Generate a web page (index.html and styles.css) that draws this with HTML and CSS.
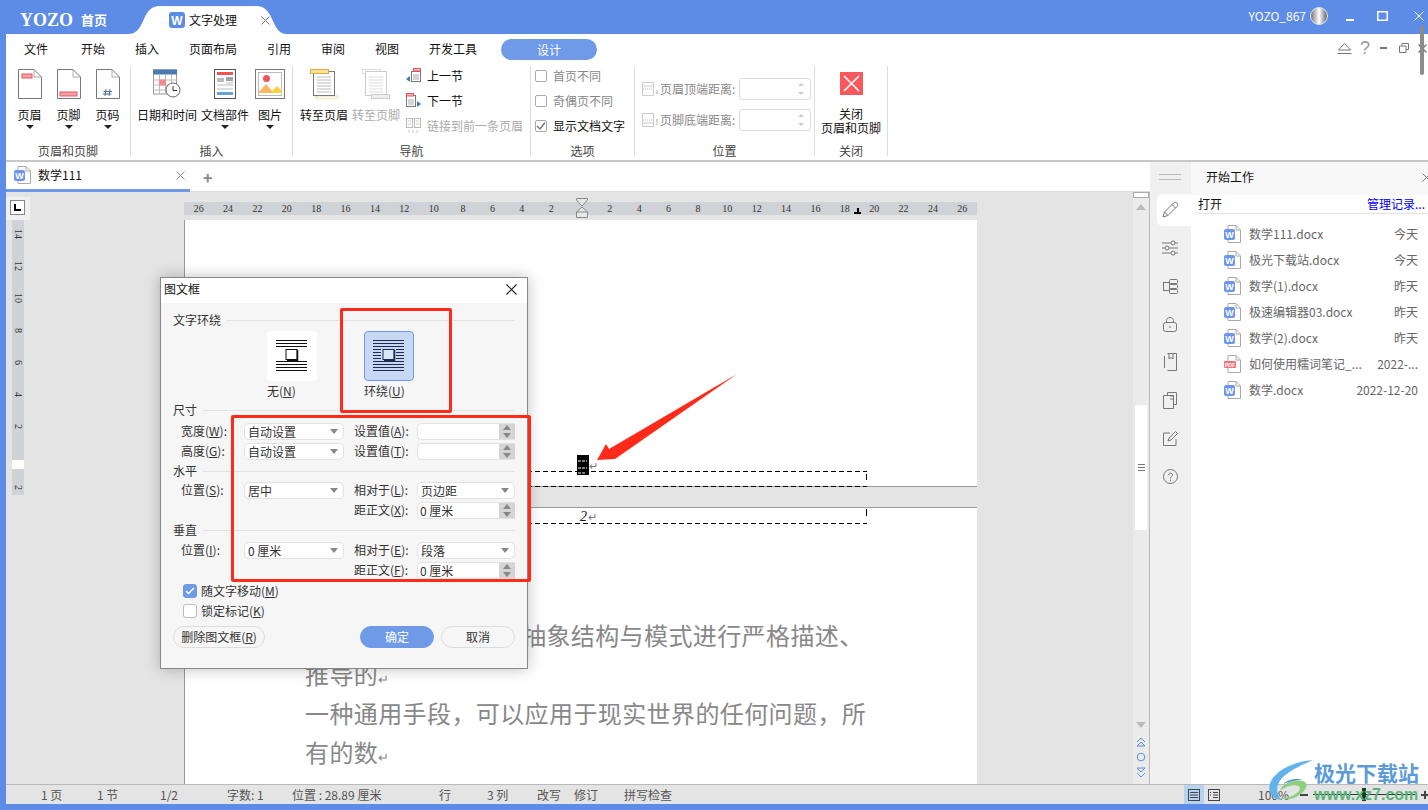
FILE: index.html
```html
<!DOCTYPE html>
<html lang="zh-CN">
<head>
    <meta charset="UTF-8">
    <title>文字处理 - YOZO</title>
    <link rel="stylesheet" href="styles.css">
</head>
<body>
<svg class="defs" width="0" height="0">
    <symbol id="doc-w" viewBox="0 0 17 18">
        <path d="M4 .5H12L16.5 5V17.5H4Z" fill="#fff" stroke="#aaa"/>
        <path d="M12 .5V5H16.5" fill="none" stroke="#aaa"/>
        <rect x="0" y="4" width="11" height="11" rx="2" fill="#6d95ea"/>
    </symbol>
    <symbol id="doc-pdf" viewBox="0 0 17 18">
        <path d="M4 .5H12L16.5 5V17.5H4Z" fill="#fff" stroke="#aaa"/>
        <path d="M12 .5V5H16.5" fill="none" stroke="#aaa"/>
        <rect x="0" y="6" width="12" height="7" rx="1" fill="#f4727c"/>
    </symbol>
    <symbol id="page" viewBox="0 0 24 30">
        <path d="M.5.5H16L23.5 8V29.5H.5Z" fill="#fff" stroke="#777"/>
        <path d="M16 .5V8H23.5" fill="none" stroke="#aaa"/>
    </symbol>
</svg>

<header class="titlebar">
    <div class="logo"><span class="logo-mark">YOZO</span><span class="logo-home">首页</span></div>
    <div class="app-tab">
        <svg class="app-tab-shape" width="159" height="28" viewBox="0 0 159 28"><path d="M0 28C10 28 12 21 16 13C20 4 24 0 32 0H128C136 0 140 4 144 13C148 21 150 28 159 28Z" fill="#fff"/></svg>
        <svg class="app-tab-icon" width="16" height="16" viewBox="0 0 16 16"><rect width="16" height="16" rx="3" fill="#5b8ce6"/><text x="8" y="12.5" font-size="12" font-weight="700" text-anchor="middle" fill="#fff" font-family="Liberation Sans, sans-serif">W</text></svg>
        <span class="app-tab-name">文字处理</span>
        <svg class="app-tab-close" width="9" height="9" viewBox="0 0 9 9"><path d="M.5.5L8.5 8.5M8.5.5L.5 8.5" stroke="#777"/></svg>
    </div>
    <div class="user">
        <span>YOZO_867</span>
        <span class="avatar"></span>
        <svg class="win-btn" width="8" height="3" viewBox="0 0 8 3"><rect width="8" height="2" y="1" fill="#fff"/></svg>
        <svg class="win-btn win-max" width="11" height="10" viewBox="0 0 11 10"><rect x=".75" y=".75" width="9.5" height="8.5" fill="none" stroke="#fff" stroke-width="1.5"/></svg>
        <svg class="win-btn win-close" width="10" height="10" viewBox="0 0 10 10"><path d="M.5.5L9.5 9.5M9.5.5L.5 9.5" stroke="#fff"/></svg>
    </div>
</header>

<div class="app">
    <section class="ribbon">
        <nav class="ribbon-tabs">
            <span>文件</span><span>开始</span><span>插入</span><span>页面布局</span><span>引用</span><span>审阅</span><span>视图</span><span>开发工具</span>
            <span class="tab-pill">设计</span>
        </nav>
        <div class="ribbon-help">
            <svg width="15" height="13" viewBox="0 0 15 13"><path d="M1.5 8L7.5 1.5L13.5 8ZM.5 11.5H14.5" fill="none" stroke="#777"/></svg>
            <span class="help-q">?</span>
            <svg class="help-min" width="7" height="2" viewBox="0 0 7 2"><rect width="7" height="2" fill="#777"/></svg>
            <svg class="help-restore" width="10" height="10" viewBox="0 0 10 10"><path d="M3 2.5V.5H9.5V6.5H7M.5 3H7V9.5H.5Z" fill="none" stroke="#777"/></svg>
            <svg class="help-close" width="9" height="9" viewBox="0 0 9 9"><path d="M.5.5L8.5 8.5M8.5.5L.5 8.5" stroke="#777" stroke-width="1.4"/></svg>
        </div>
        <div class="ribbon-groups">
            <div class="group group-header">
                <div class="group-body">
                    <button class="big-btn w39">
                        <svg class="big-icon" width="24" height="30"><use href="#page"/><rect x="4" y="5" width="10" height="4" fill="#f5a3a8" stroke="#e8555c"/></svg>
                        <span>页眉</span><i class="caret"></i>
                    </button>
                    <button class="big-btn w39">
                        <svg class="big-icon" width="24" height="30"><use href="#page"/><rect x="3" y="23" width="17" height="4" fill="#f5a3a8" stroke="#e8555c"/></svg>
                        <span>页脚</span><i class="caret"></i>
                    </button>
                    <button class="big-btn w39">
                        <svg class="big-icon" width="24" height="30"><use href="#page"/><path d="M10 20L9 27M14 20L13 27M7.5 22.5H16M7 25H15.5" stroke="#4a6f9c" fill="none"/></svg>
                        <span>页码</span><i class="caret"></i>
                    </button>
                </div>
                <div class="group-label">页眉和页脚</div>
            </div>
            <div class="group group-insert">
                <div class="group-body">
                    <button class="big-btn w60">
                        <svg class="big-icon" width="28" height="29" viewBox="0 0 28 29"><rect x=".5" y=".5" width="23" height="24" fill="#fff" stroke="#999"/><rect x="0" y="0" width="24" height="5" fill="#4a7ab0"/><path d="M6.5 5V25M12.5 5V25M18.500 5V25M0 10.5H24M0 15.5H24M0 20.5H24" stroke="#bbb"/><rect x="6" y="10" width="7" height="6" fill="#f78a8f"/><circle cx="20" cy="20.5" r="7" fill="#fff" stroke="#666"/><path d="M20 16.5V21H24" fill="none" stroke="#333"/></svg>
                        <span>日期和时间</span>
                    </button>
                    <button class="big-btn w56">
                        <svg class="big-icon" width="22" height="30" viewBox="0 0 22 30"><rect x=".5" y=".5" width="21" height="29" fill="#fff" stroke="#555"/><rect x="3" y="3" width="16" height="3" fill="#ef5358"/><rect x="3" y="9" width="7" height="4" fill="#bbb"/><rect x="12" y="8" width="7" height="4" fill="#9aa6b0"/><path d="M12 14H19M3 16H19M3 20H19" stroke="#bbb"/><rect x="3" y="23" width="16" height="3" fill="#6a9fd4"/></svg>
                        <span>文档部件</span><i class="caret"></i>
                    </button>
                    <button class="big-btn w34">
                        <svg class="big-icon" width="30" height="30" viewBox="0 0 30 30"><rect x=".5" y=".5" width="29" height="29" fill="#fff" stroke="#777"/><rect x="3.5" y="3.5" width="23" height="23" fill="#fff" stroke="#bbb"/><circle cx="11.5" cy="9.5" r="3.5" fill="#f0555a"/><path d="M3 24L11 15L19 24Z" fill="#fbb85f"/><path d="M15 24L22 17L27 22V24Z" fill="#f9d448"/></svg>
                        <span>图片</span><i class="caret"></i>
                    </button>
                </div>
                <div class="group-label">插入</div>
            </div>
            <div class="group group-nav">
                <div class="group-body">
                    <button class="big-btn w52">
                        <svg class="big-icon" width="28" height="30" viewBox="0 0 28 30"><rect x="6" y="27" width="22" height="3" fill="#fff" stroke="#f5cf87"/><rect x="3.5" y="2.5" width="21" height="24" fill="#fff" stroke="#777"/><path d="M7 8H21M7 11H21M7 14H21M7 17H21M7 20H21M7 23H21" stroke="#bbb"/><rect x=".5" y=".5" width="18" height="4" fill="#fde39c" stroke="#e6a83a"/></svg>
                        <span>转至页眉</span>
                    </button>
                    <button class="big-btn w52 is-off">
                        <svg class="big-icon" width="28" height="30" viewBox="0 0 28 30"><rect x="0.5" y=".5" width="18" height="4" fill="#fff" stroke="#ddd"/><rect x="3.5" y="2.5" width="21" height="24" fill="#fff" stroke="#ccc"/><path d="M7 8H21M7 11H21M7 14H21M7 17H21M7 20H21M7 23H21" stroke="#ddd"/><rect x="9.5" y="25.5" width="18" height="4" fill="#eee" stroke="#ccc"/></svg>
                        <span>转至页脚</span>
                    </button>
                    <div class="stack">
                        <div class="stack-row">
                            <svg width="15" height="16" viewBox="0 0 15 16"><path d="M0 11L4 8V14Z" fill="#4a7ab0"/><rect x="5.5" y="3.5" width="9" height="10" fill="#fff" stroke="#777"/><path d="M7 7H13M7 9H13M7 11H13" stroke="#aaa"/><rect x="7.5" y=".5" width="7" height="2.5" fill="#fbb" stroke="#e8555c"/></svg>
                            <span>上一节</span>
                        </div>
                        <div class="stack-row">
                            <svg width="15" height="16" viewBox="0 0 15 16"><path d="M15 11L11 8V14Z" fill="#4a7ab0"/><rect x=".5" y="2.5" width="9" height="11" fill="#fff" stroke="#777"/><path d="M2 7H8M2 9H8M2 11H8" stroke="#aaa"/><rect x=".5" y=".5" width="7" height="2.5" fill="#fbb" stroke="#e8555c"/></svg>
                            <span>下一节</span>
                        </div>
                        <div class="stack-row is-off">
                            <svg width="15" height="16" viewBox="0 0 15 16"><rect x=".5" y=".5" width="6" height="9" fill="none" stroke="#bbb"/><rect x="8.5" y=".5" width="6" height="9" fill="none" stroke="#bbb"/><path d="M2 3H5M2 6H5M10 3H13M10 6H13M3 12V15M7 12V15M11 12V15" stroke="#ccc"/></svg>
                            <span>链接到前一条页眉</span>
                        </div>
                    </div>
                </div>
                <div class="group-label">导航</div>
            </div>
            <div class="group group-opts">
                <div class="group-body">
                    <div class="stack">
                        <label class="stack-row is-muted"><i class="ribbon-check"></i><span>首页不同</span></label>
                        <label class="stack-row is-muted"><i class="ribbon-check"></i><span>奇偶页不同</span></label>
                        <label class="stack-row"><i class="ribbon-check"><svg width="10" height="10" viewBox="0 0 10 10"><path d="M1 5L4 8L9 1.5" fill="none" stroke="#777" stroke-width="1.4"/></svg></i><span>显示文档文字</span></label>
                    </div>
                </div>
                <div class="group-label">选项</div>
            </div>
            <div class="group group-pos">
                <div class="group-body">
                    <div class="pos-rows">
                        <div class="pos-row">
                            <svg width="17" height="14" viewBox="0 0 17 14"><rect x=".5" y=".5" width="11" height="13" fill="#fff" stroke="#ccc"/><path d="M1 4H11" stroke="#ccc"/><path d="M1 7H11" stroke="#bbb" stroke-dasharray="1 1"/><path d="M15 8V12M14 11H16" stroke="#bbb"/></svg>
                            <span>页眉顶端距离:</span>
                            <div class="pos-input"><i class="up"></i><i class="down"></i></div>
                        </div>
                        <div class="pos-row">
                            <svg width="17" height="14" viewBox="0 0 17 14"><rect x=".5" y=".5" width="11" height="13" fill="#fff" stroke="#ccc"/><path d="M1 10H11" stroke="#ccc"/><path d="M1 7H11" stroke="#bbb" stroke-dasharray="1 1"/><path d="M15 6V12M14 7H16" stroke="#bbb"/></svg>
                            <span>页脚底端距离:</span>
                            <div class="pos-input"><i class="up"></i><i class="down"></i></div>
                        </div>
                    </div>
                </div>
                <div class="group-label">位置</div>
            </div>
            <div class="group group-close">
                <div class="group-body">
                    <button class="big-btn close-btn">
                        <svg width="23" height="23" viewBox="0 0 23 23"><rect width="23" height="23" fill="#f9585c"/><path d="M4 4L19 19M19 4L4 19" stroke="#fff" stroke-width="1.6"/></svg>
                        <span>关闭<br>页眉和页脚</span>
                    </button>
                </div>
                <div class="group-label">关闭</div>
            </div>
        </div>
    </section>

    <div class="work">
        <main class="editor">
            <div class="doc-tabs">
                <div class="doc-tab">
                    <svg width="17" height="18" viewBox="0 0 17 18"><use href="#doc-w"/><text class="doc-letter" x="5.5" y="12.5">W</text></svg>
                    <span class="doc-tab-name">数学111</span>
                    <svg class="doc-tab-close" width="9" height="9" viewBox="0 0 9 9"><path d="M.5.5L8.5 8.5M8.5.5L.5 8.5" stroke="#888"/></svg>
                </div>
                <span class="doc-add">+</span>
            </div>
            <div class="doc-area">
                <div class="side-ruler">
                    <div class="tab-stop"><span class="tab-stop-box"><i></i></span></div>
                    <div class="vruler">
                        <span>14</span><span>12</span><span>10</span><span>8</span><span>6</span><span>4</span><span>2</span>
                        <b class="vruler-mark"></b>
                        <span class="vruler-last">2</span>
                    </div>
                </div>
                <div class="pages">
                    <div class="hruler">
                        <span>26</span><span>24</span><span>22</span><span>20</span><span>18</span><span>16</span><span>14</span><span>12</span><span>10</span><span>8</span><span>6</span><span>4</span><span>2</span>
                        <span class="hruler-mark"><svg width="12" height="20" viewBox="0 0 12 20"><path d="M.5.5H11.5V2L6 8L.5 2ZM6 9L11.5 14V19.5H.5V14Z" fill="#e8e8e8" stroke="#888"/><path d="M.5 14H11.5" stroke="#888"/></svg></span>
                        <span>2</span><span>4</span><span>6</span><span>8</span><span>10</span><span>12</span><span>14</span><span>16</span><span>18</span><span>20</span><span>22</span><span>24</span><span>26</span>
                        <i class="hruler-stop"></i>
                    </div>
                    <div class="page page-first">
                        <div class="frame-mark">
                            <svg width="12" height="20" viewBox="0 0 12 20"><rect width="12" height="20" fill="#000"/><path d="M1 6H10M1 13H10M1 18H8" stroke="#fff" stroke-dasharray="3 1"/></svg>
                            <span class="para-mark">↵</span>
                        </div>
                        <div class="footer-frame"></div>
                    </div>
                    <div class="page page-second">
                        <div class="header-frame"><em>2</em><span class="para-mark">↵</span></div>
                        <div class="body-text">
                            <p class="first-line">抽象结构与模式进行严格描述、</p>
                            <p>推导的<span class="para-small">↵</span></p>
                            <p>一种通用手段，可以应用于现实世界的任何问题，所</p>
                            <p>有的数<span class="para-small">↵</span></p>
                        </div>
                    </div>
                </div>
                <div class="vscroll">
                    <div class="splitter"></div>
                    <i class="arrow-up"></i>
                    <div class="thumb"><svg width="7" height="7" viewBox="0 0 7 7"><path d="M0 .5H7M0 3.5H7M0 6.5H7" stroke="#777"/></svg></div>
                    <i class="arrow-down"></i>
                    <svg class="scroll-nav" width="10" height="42" viewBox="0 0 10 42" fill="none" stroke="#5b8ce6"><path d="M1 5L5 1L9 5M1 9H9L5 5Z"/><circle cx="5" cy="20" r="3.8"/><path d="M1 31H9L5 35ZM1 36L5 40L9 36"/></svg>
                </div>
            </div>
        </main>
        <aside class="panel">
            <div class="rail">
                <div class="rail-grip"></div>
                <div class="rail-item is-active"><svg width="18" height="18" viewBox="0 0 18 18" fill="none" stroke="#777"><path d="M2 16L3.5 11L12.5 2C13.5 1 15 1 16 2C17 3 17 4.5 16 5.500L7 14.500ZM3.500 11L7 14.500M11 3.500L14.500 7"/></svg></div>
                <div class="rail-item"><svg width="16" height="16" viewBox="0 0 16 16" fill="none" stroke="#777"><path d="M0 3H9M13 3H16M0 8H3M7 8H16M0 13H9M13 13H16"/><circle cx="11" cy="3" r="2"/><circle cx="5" cy="8" r="2"/><circle cx="11" cy="13" r="2"/></svg></div>
                <div class="rail-item"><svg width="15" height="15" viewBox="0 0 15 15" fill="none" stroke="#777"><rect x=".5" y="3.500" width="6" height="8"/><rect x="6.500" y=".5" width="8" height="4" rx="1"/><rect x="6.500" y="5.500" width="8" height="4" rx="1"/><rect x="6.500" y="10.500" width="8" height="4" rx="1"/></svg></div>
                <div class="rail-item"><svg width="14" height="16" viewBox="0 0 14 16" fill="none" stroke="#777"><rect x=".5" y="6.500" width="13" height="9" rx="2"/><path d="M3.500 6.500V4.500C3.500 .5 10.500 .5 10.500 4.500V6.500M7 10V12"/></svg></div>
                <div class="rail-item"><svg width="13" height="18" viewBox="0 0 13 18" fill="none" stroke="#777"><path d="M3.500.5H12.500V17.500H3.500M.5 3V15M5 .5V6L7 4.500L9 6V.5"/></svg></div>
                <div class="rail-item"><svg width="14" height="17" viewBox="0 0 14 17" fill="none" stroke="#777"><path d="M4.500 3.500V.5H13.500V12.500H10.500M.5 3.500H10.500V16.500H.5ZM7 4V4M7 4H11M7 7H11"/></svg></div>
                <div class="rail-item"><svg width="15" height="15" viewBox="0 0 15 15" fill="none" stroke="#777"><path d="M13 8V14.500H.5V2H7M5 10L6 7L12.500 .5L14.500 2.500L8 9Z"/></svg></div>
                <div class="rail-item"><svg width="15" height="15" viewBox="0 0 15 15" fill="none" stroke="#777"><circle cx="7.500" cy="7.500" r="7"/><path d="M5.500 6C5.500 3.500 9.500 3.500 9.500 6C9.500 7.500 7.500 7.500 7.500 9.500M7.500 10.500V12"/></svg></div>
            </div>
            <div class="panel-main">
                <div class="panel-head">
                    <span>开始工作</span>
                    <svg width="9" height="9" viewBox="0 0 9 9"><path d="M.5.5L8.5 8.5M8.5.5L.5 8.5" stroke="#777"/></svg>
                </div>
                <div class="panel-open"><span>打开</span><a>管理记录...</a></div>
                <ul class="recent">
                    <li><svg width="17" height="18" viewBox="0 0 17 18"><use href="#doc-w"/><text class="doc-letter" x="5.5" y="12.5">W</text></svg><span class="recent-name">数学111.docx</span><span>今天</span></li>
                    <li><svg width="17" height="18" viewBox="0 0 17 18"><use href="#doc-w"/><text class="doc-letter" x="5.5" y="12.5">W</text></svg><span class="recent-name">极光下载站.docx</span><span>今天</span></li>
                    <li><svg width="17" height="18" viewBox="0 0 17 18"><use href="#doc-w"/><text class="doc-letter" x="5.5" y="12.5">W</text></svg><span class="recent-name">数学(1).docx</span><span>昨天</span></li>
                    <li><svg width="17" height="18" viewBox="0 0 17 18"><use href="#doc-w"/><text class="doc-letter" x="5.5" y="12.5">W</text></svg><span class="recent-name">极速编辑器03.docx</span><span>昨天</span></li>
                    <li><svg width="17" height="18" viewBox="0 0 17 18"><use href="#doc-w"/><text class="doc-letter" x="5.5" y="12.5">W</text></svg><span class="recent-name">数学(2).docx</span><span>昨天</span></li>
                    <li><svg width="17" height="18" viewBox="0 0 17 18"><use href="#doc-pdf"/><text class="doc-letter doc-letter-pdf" x="6" y="11.5">PDF</text></svg><span class="recent-name">如何使用糯词笔记_...</span><span>2022-...</span></li>
                    <li><svg width="17" height="18" viewBox="0 0 17 18"><use href="#doc-w"/><text class="doc-letter" x="5.5" y="12.5">W</text></svg><span class="recent-name">数学.docx</span><span>2022-12-20</span></li>
                </ul>
            </div>
        </aside>
    </div>

    <footer class="statusbar">
        <div class="status-cells">
            <span>1 页</span><span>1 节</span><span>1/2</span><span>字数: 1</span><span>位置 : 28.89 厘米</span><span>行</span><span>3 列</span><span>改写</span><span>修订</span><span>拼写检查</span>
        </div>
        <div class="status-right">
            <span class="view-btn is-active"><svg width="12" height="12" viewBox="0 0 12 12" fill="none" stroke="#444"><rect x=".5" y=".5" width="11" height="11"/><path d="M2 3.500H10M2 6H10M2 8.500H10"/></svg></span>
            <span class="view-btn view-outline"><svg width="12" height="12" viewBox="0 0 12 12" fill="none" stroke="#444"><rect x=".5" y=".5" width="11" height="11"/><path d="M2 3.500H3M5 3.500H10M5 6H10M5 8.500H10M2 6H3"/></svg></span>
            <span class="zoom-val">100%</span>
            <span class="zoom-minus"></span>
            <span class="zoom-track"><i></i></span>
            <span class="zoom-plus"></span>
        </div>
    </footer>
</div>

<!-- dialog floats over the document -->
<div class="dialog">
    <div class="dialog-head">
        <span>图文框</span>
        <svg width="11" height="11" viewBox="0 0 11 11"><path d="M.5.5L10.5 10.500M10.500.5L.5 10.500" stroke="#222" stroke-width="1.1"/></svg>
    </div>
    <div class="dialog-body">
        <div class="sec-title"><span>文字环绕</span></div>
        <div class="wrap-opts">
            <div class="wrap-opt">
                <div class="wrap-tile">
                    <svg width="32" height="32" viewBox="0 0 32 32" stroke="#111" fill="none"><path d="M0 .5H31M0 3.500H31M0 6.500H31M0 21.500H31M0 24.500H31M0 27.500H31M0 30.500H31"/><rect x="10" y="9.500" width="11" height="10" fill="#fff"/><path d="M21.500 10V20.500H11" stroke-width="1.500"/></svg>
                </div>
                <span>无(<u>N</u>)</span>
            </div>
            <div class="wrap-opt">
                <div class="wrap-tile is-active">
                    <svg width="32" height="32" viewBox="0 0 32 32" stroke="#1d2b4f" fill="none"><path d="M0 .5H31M0 3.500H31M0 6.500H31M0 9.500H8M23 9.500H31M0 12.500H8M23 12.500H31M0 15.500H8M23 15.500H31M0 18.500H8M23 18.500H31M0 21.500H31M0 24.500H31M0 27.500H31M0 30.500H31"/><rect x="10" y="9.500" width="11" height="10" fill="#dbe6f8"/><path d="M21.500 10V20.500H11" stroke-width="1.500"/></svg>
                </div>
                <span>环绕(<u>U</u>)</span>
            </div>
        </div>

        <div class="sec-title sec-size"><span>尺寸</span></div>
        <div class="form-grid form-size">
            <label>宽度(<u>W</u>):</label><div class="combo"><span>自动设置</span><i></i></div>
            <label class="col-r">设置值(<u>A</u>):</label><div class="spin"><span></span><b></b></div>
            <label>高度(<u>G</u>):</label><div class="combo"><span>自动设置</span><i></i></div>
            <label class="col-r">设置值(<u>T</u>):</label><div class="spin"><span></span><b></b></div>
        </div>

        <div class="sec-title"><span>水平</span></div>
        <div class="form-grid form-horiz">
            <label>位置(<u>S</u>):</label><div class="combo"><span>居中</span><i></i></div>
            <label class="col-r">相对于(<u>L</u>):</label><div class="combo col-v"><span>页边距</span><i></i></div>
            <label class="col-r">距正文(<u>X</u>):</label><div class="spin"><span>0 厘米</span><b></b></div>
        </div>

        <div class="sec-title"><span>垂直</span></div>
        <div class="form-grid form-vert">
            <label>位置(<u>I</u>):</label><div class="combo"><span>0 厘米</span><i></i></div>
            <label class="col-r">相对于(<u>E</u>):</label><div class="combo col-v"><span>段落</span><i></i></div>
            <label class="col-r">距正文(<u>F</u>):</label><div class="spin"><span>0 厘米</span><b></b></div>
        </div>

        <div class="checks">
            <label class="check-row"><i class="check is-on"><svg width="10" height="8" viewBox="0 0 10 8"><path d="M1 4L3.500 6.500L9 1" fill="none" stroke="#fff" stroke-width="1.500"/></svg></i><span>随文字移动(<u>M</u>)</span></label>
            <label class="check-row"><i class="check"></i><span>锁定标记(<u>K</u>)</span></label>
        </div>

        <div class="dialog-actions">
            <button class="btn btn-del">删除图文框(<u>R</u>)</button>
            <button class="btn btn-ok">确定</button>
            <button class="btn btn-cancel">取消</button>
        </div>
    </div>
</div>

<!-- red marks drawn on top of the screenshot -->
<div class="mark mark-wrap"></div>
<div class="mark mark-form"></div>
<svg class="mark-arrow" width="150" height="95" viewBox="0 0 150 95"><path d="M7 90L16 74L19 79L147 4L25 89Z" fill="#ff2a1a"/></svg>
<div class="corner-scroll"></div>

<div class="watermark">
    <svg width="46" height="42" viewBox="0 0 46 42" fill="none"><path d="M45 0C30 1 10 8 3 21C-2 32 5 40 14 40C8 35 7 26 14 18C22 10 34 5 45 0Z" fill="#62b3ec"/><path d="M12 31C14 23 26 19 35 21C42 23 38 32 28 37C22 40 17 40 14 38C22 38 32 33 32 28C32 24 20 24 12 31Z" fill="#8ccf7e"/><path d="M15 24C20 19 30 18 34 20C27 20 20 22 15 24Z" fill="#4f8fd0"/></svg>
    <div class="wm-text">
        <span class="wm-name">极光下载站</span>
        <span class="wm-url">www.xz7.com</span>
    </div>
</div>
</body>
</html>
```

FILE: styles.css
```css
:root {
    --blue: #5c8ce6;
    --grey-bg: #e4e4e4;
    --ruler: #cfd2d6;
    --red: #ff2a1a;
}
* {
    box-sizing: border-box;
}
html, body {
    height: 810px;
    overflow: hidden;
}
body {
    margin: 0;
    position: relative;
    background: var(--blue);
    font-family: "Noto Sans CJK SC", "Liberation Sans", sans-serif;
    font-size: 12px;
    color: #111;
    line-height: 16px;
}
button {
    font: inherit;
    color: inherit;
    background: none;
    border: none;
    padding: 0;
}
svg {
    display: block;
    flex: none;
}
.defs {
    position: absolute;
}
.doc-letter {
    font-family: "Liberation Sans", sans-serif;
    font-size: 9px;
    font-weight: 700;
    text-anchor: middle;
    fill: #fff;
}
.doc-letter-pdf {
    font-size: 5px;
}

/* title bar */
.titlebar {
    height: 34px;
    display: flex;
    align-items: flex-end;
    color: #fff;
}
.logo {
    width: 128px;
    height: 34px;
    padding: 6px 0 0 20px;
    display: flex;
    align-items: center;
    gap: 9px;
}
.logo-mark {
    font-family: "Liberation Serif", serif;
    font-weight: 700;
    font-size: 18px;
    width: 52px;
}
.logo-home {
    font-weight: 700;
    font-size: 13px;
}
.app-tab {
    position: relative;
    width: 159px;
    height: 28px;
    display: flex;
    align-items: center;
    color: #111;
    padding-left: 41px;
}
.app-tab-shape {
    position: absolute;
    left: 0;
    top: 0;
}
.app-tab-icon, .app-tab-name, .app-tab-close {
    position: relative;
}
.app-tab-name {
    margin-left: 4px;
}
.app-tab-close {
    margin-left: 24px;
}
.user {
    margin-left: auto;
    height: 34px;
    padding-right: 4px;
    display: flex;
    align-items: center;
    font-size: 12px;
    padding-bottom: 2px;
}
.avatar {
    width: 18px;
    height: 18px;
    margin-left: 4px;
    border-radius: 50%;
    border: 1px solid #dfe6f3;
    background: linear-gradient(90deg, #777, #fff 50%, #666);
}
.win-btn {
    margin-left: 18px;
    margin-top: 6px;
}
.win-max {
    margin-left: 23px;
    margin-top: 0;
}
.win-close {
    margin-left: 26px;
    margin-top: 0;
}

/* main frame */
.app {
    margin-left: 6px;
    height: 770px;
    background: #fff;
    display: flex;
    flex-direction: column;
}

/* ribbon */
.ribbon {
    position: relative;
    height: 128px;
    border-bottom: 2px solid #c8c8c8;
}
.ribbon-tabs {
    height: 30px;
    padding: 0 0 0 18px;
    display: grid;
    grid-template-columns: 57px 54px 54px 78px 54px 54px 54px 72px 96px;
    align-items: center;
    justify-content: start;
}
.tab-pill {
    height: 21px;
    margin-top: 1px;
    border-radius: 11px;
    background: #6f9ae8;
    color: #fff;
    text-align: center;
    line-height: 21px;
}
.ribbon-help {
    position: absolute;
    right: 1px;
    top: 6px;
    height: 16px;
    display: flex;
    align-items: center;
}
.help-q {
    width: 9px;
    margin-left: 8px;
    font-family: "Liberation Sans", sans-serif;
    font-size: 18px;
    color: #999;
}
.help-min { margin-left: 11px; }
.help-restore { margin-left: 12px; }
.help-close { margin-left: 9px; }
.corner-scroll {
    position: absolute;
    left: 1420px;
    top: 25px;
    width: 4px;
    height: 50px;
    border-radius: 2px;
    background: #8c8c8c;
}
.ribbon-groups {
    height: 90px;
    margin-top: 2px;
    display: flex;
}
.group {
    display: flex;
    flex-direction: column;
    border-right: 1px solid #ddd;
}
.group-body {
    height: 77px;
    display: flex;
}
.group-label {
    height: 16px;
    margin-bottom: -3px;
    text-align: center;
    color: #444;
}
.group-header { width: 125px; }
.group-insert { width: 162px; }
.group-nav { width: 238px; }
.group-opts { width: 104px; }
.group-pos { width: 180px; }
.group-close { width: 73px; }
.group-header .group-body { padding-left: 4px; }
.group-insert .group-body { padding-left: 6px; }
.group-nav .group-body { padding-left: 5px; }
.group-opts .group-body { padding-left: 4px; }

.big-btn {
    display: flex;
    flex-direction: column;
    align-items: center;
    padding-top: 3px;
    white-space: nowrap;
}
.big-btn > span {
    line-height: 16px;
}
.big-icon {
    margin-bottom: 8px;
    height: 30px;
}
.w34 { width: 34px; }
.w39 { width: 39px; }
.w52 { width: 52px; }
.w56 { width: 56px; }
.w60 { width: 60px; }
.caret {
    margin-top: 2px;
    border: 4px solid transparent;
    border-top-color: #222;
    border-bottom: none;
}
.is-off {
    color: #aaa;
}
.is-muted {
    color: #888;
}
.stack {
    display: flex;
    flex-direction: column;
    gap: 5px;
    margin-left: 4px;
}
.stack-row {
    height: 20px;
    display: flex;
    align-items: center;
    gap: 6px;
    white-space: nowrap;
}
.ribbon-check {
    width: 12px;
    height: 12px;
    border: 1px solid #aaa;
    border-radius: 2px;
    display: flex;
    align-items: center;
    justify-content: center;
}
.group-opts .stack {
    margin-left: 0;
}
.pos-rows {
    padding: 12px 0 0 7px;
    display: flex;
    flex-direction: column;
    gap: 9px;
    color: #888;
}
.pos-row {
    height: 22px;
    display: flex;
    align-items: center;
}
.pos-row > span {
    width: 79px;
    margin-left: 1px;
    white-space: nowrap;
}
.pos-input {
    position: relative;
    width: 72px;
    height: 22px;
    border: 1px solid #ddd;
    border-radius: 3px;
    background: #fff;
}
.pos-input .up, .pos-input .down {
    position: absolute;
    right: 6px;
    border: 3px solid transparent;
}
.pos-input .up {
    top: 1px;
    border-bottom-color: #ccc;
}
.pos-input .down {
    bottom: 1px;
    border-top-color: #ccc;
}
.close-btn {
    width: 72px;
    padding-top: 6px;
}
.close-btn svg {
    margin-bottom: 12px;
}
.close-btn > span {
    line-height: 14px;
    text-align: center;
}

/* work area */
.work {
    flex: 1;
    min-height: 0;
    display: flex;
}
.editor {
    width: 1144px;
    display: flex;
    flex-direction: column;
}
.doc-tabs {
    height: 30px;
    flex: none;
    display: flex;
    align-items: center;
    border-bottom: 1px solid #ddd;
}
.doc-tab {
    width: 184px;
    height: 30px;
    flex: none;
    padding: 0 0 0 8px;
    display: flex;
    align-items: center;
    border-bottom: 3px solid #6f9ae8;
}
.doc-tab-name {
    width: 138px;
    margin-left: 7px;
    white-space: nowrap;
}
.doc-add {
    margin-left: 13px;
    font-size: 16px;
    font-weight: 700;
    color: #888;
}
.doc-area {
    flex: 1;
    min-height: 0;
    display: flex;
    background: var(--grey-bg);
}
.side-ruler {
    width: 178px;
    padding-top: 5px;
}
.tab-stop {
    width: 24px;
    height: 23px;
    padding: 3px 4px;
    background: #f0f0f0;
}
.tab-stop-box {
    display: block;
    width: 15px;
    height: 15px;
    border: 1px solid #888;
    background: #fff;
    padding: 3px;
}
.tab-stop-box i {
    display: block;
    width: 7px;
    height: 7px;
    border-left: 2px solid #000;
    border-bottom: 2px solid #000;
}
.vruler {
    width: 12px;
    height: 275px;
    margin-left: 6px;
    background: var(--ruler);
    display: flex;
    flex-direction: column;
    align-items: center;
    font-family: "Liberation Serif", serif;
    font-size: 10px;
    color: #333;
}
.vruler span {
    flex: none;
    height: 32px;
    line-height: 12px;
    writing-mode: vertical-rl;
    display: flex;
    align-items: center;
    justify-content: center;
}
.vruler span:first-child {
    margin-top: -2px;
}
.vruler-mark {
    width: 12px;
    height: 13px;
    margin-top: 18px;
    background: #fff;
}
.vruler span.vruler-last {
    height: 16px;
    margin-top: 10px;
}
.pages {
    width: 793px;
    padding-top: 10px;
    overflow: hidden;
}
.hruler {
    position: relative;
    height: 13px;
    display: grid;
    grid-template-columns: repeat(27, 1fr);
    background: var(--ruler);
    font-family: "Liberation Serif", serif;
    font-size: 10px;
    line-height: 13px;
    text-align: center;
    color: #333;
    margin-bottom: 5px;
}
.hruler-mark {
    display: flex;
    justify-content: center;
    padding-left: 4px;
    margin-top: -4px;
    position: relative;
}
.hruler-stop {
    position: absolute;
    left: 670px;
    top: 6px;
    width: 7px;
    height: 6px;
    background: linear-gradient(#000, #000) center / 2px 100% no-repeat, linear-gradient(#000, #000) bottom / 100% 2px no-repeat;
}
.page {
    position: relative;
    background: #fff;
    border-left: 1px solid #999;
}
.page-first {
    height: 267px;
    margin-bottom: 20px;
    border-bottom: 1px solid #999;
}
.page-second {
    height: 300px;
    border-top: 1px solid #999;
}
.frame-mark {
    position: absolute;
    left: 392px;
    top: 235px;
    display: flex;
    align-items: center;
}
.para-mark {
    color: #777;
    font-size: 11px;
}
.footer-frame, .header-frame {
    position: absolute;
    left: 230px;
    right: 110px;
    background-image: repeating-linear-gradient(90deg, #000 0 5px, transparent 5px 8px);
    background-repeat: no-repeat;
}
.footer-frame::after, .header-frame::after {
    content: "";
    position: absolute;
    right: 0;
    width: 1px;
    background: #000;
}
.footer-frame {
    top: 251px;
    bottom: -1px;
    background-size: 100% 1px;
    background-position: 0 0, 0 100%;
    background-image: repeating-linear-gradient(90deg, #000 0 5px, transparent 5px 8px), repeating-linear-gradient(90deg, #000 0 5px, transparent 5px 8px);
}
.footer-frame::after {
    top: 3px;
    height: 6px;
}
.header-frame {
    top: 0;
    height: 16px;
    background-size: 100% 1px;
    background-position: 0 100%;
    padding-left: 165px;
    line-height: 17px;
    font-family: "Liberation Serif", serif;
    font-size: 14px;
}
.header-frame::after {
    top: 1px;
    height: 7px;
}
.header-frame em {
    margin-right: 1px;
}
.body-text {
    padding: 107px 0 0 120px;
    font-size: 24px;
    line-height: 39px;
    color: #888;
    white-space: nowrap;
    letter-spacing: .4px;
}
.body-text p {
    height: 39px;
    margin: 0;
}
.body-text .first-line {
    padding-left: 217px;
}
.para-small {
    font-size: 13px;
    letter-spacing: 0;
}
.vscroll {
    position: relative;
    width: 17px;
    margin-left: 156px;
    background: #ebebeb;
    border-right: 1px solid #bbb;
    display: flex;
    flex-direction: column;
    align-items: center;
}
.splitter {
    width: 16px;
    height: 6px;
    background: #fff;
    border: 1px solid #aaa;
    flex: none;
}
.arrow-up {
    margin-top: 6px;
    border: 5px solid transparent;
    border-bottom: 6px solid #bbb;
    border-top: none;
}
.thumb {
    width: 12px;
    height: 125px;
    margin-top: 195px;
    background: #fff;
    border-radius: 2px;
    display: flex;
    align-items: center;
    justify-content: center;
    flex: none;
}
.arrow-down {
    margin-top: 192px;
    border: 5px solid transparent;
    border-top: 6px solid #bbb;
    border-bottom: none;
}
.scroll-nav {
    margin-top: 9px;
}

/* right panel */
.panel {
    flex: 1;
    margin-top: -1px;
    display: flex;
    background: #fff;
}
.rail {
    width: 41px;
    flex: none;
    background: #f0f0f0;
    display: flex;
    flex-direction: column;
    align-items: flex-end;
}
.rail-grip {
    width: 22px;
    height: 6px;
    margin: 13px 10px 14px 0;
    border-top: 1px solid #bbb;
    border-bottom: 1px solid #bbb;
}
.rail-item {
    width: 34px;
    height: 38px;
    padding-right: 8px;
    display: flex;
    align-items: center;
    justify-content: center;
}
.rail-item.is-active {
    height: 32px;
    margin-bottom: 3px;
    background: #fff;
    border-radius: 6px 0 0 6px;
}
.panel-main {
    flex: 1;
    min-width: 0;
}
.panel-head {
    height: 34px;
    padding: 0 0 2px 15px;
    background: #f8f8f8;
    display: flex;
    align-items: center;
    justify-content: space-between;
    overflow: hidden;
}
.panel-head svg {
    margin-right: -3px;
}
.panel-open {
    height: 19px;
    margin-left: 7px;
    padding: 1px 3px 0 0;
    display: flex;
    justify-content: space-between;
    border-bottom: 1px solid #e4e4e4;
}
.panel-open a {
    color: #0000ff;
}
.recent {
    margin: 7px 0 0;
    padding: 0;
    list-style: none;
    color: #666;
}
.recent li {
    height: 26px;
    padding: 0 10px 0 33px;
    display: flex;
    align-items: center;
    white-space: nowrap;
}
.recent-name {
    flex: 1;
    margin-left: 8px;
}

/* status bar */
.statusbar {
    height: 20px;
    flex: none;
    background: var(--grey-bg);
    border-top: 1px solid #b9b9b9;
    display: flex;
    color: #555;
}
.status-cells {
    padding-left: 35px;
    display: grid;
    grid-template-columns: 56px 63px 67px 65px 147px 48px 50px 37px 50px auto;
    align-items: center;
    white-space: nowrap;
}
.status-right {
    margin-left: auto;
    margin-right: -1px;
    display: flex;
    align-items: center;
}
.view-btn {
    width: 20px;
    height: 19px;
    display: flex;
    align-items: center;
    justify-content: center;
}
.view-btn.is-active {
    background: #b5d3ef;
}
.view-btn.view-outline {
    width: 12px;
    margin-left: 4px;
}
.zoom-val {
    margin-left: 38px;
    width: 42px;
}
.zoom-minus {
    width: 8px;
    height: 2px;
    background: #444;
}
.zoom-track {
    position: relative;
    width: 102px;
    height: 1px;
    margin-left: 5px;
    background: #333;
}
.zoom-track i {
    position: absolute;
    left: 49px;
    top: -6px;
    width: 4px;
    height: 13px;
    background: #1e3a28;
}
.zoom-plus {
    width: 8px;
    height: 8px;
    margin-left: 6px;
    background: linear-gradient(#444, #444) center / 100% 2px no-repeat, linear-gradient(#444, #444) center / 2px 100% no-repeat;
}

/* frame dialog */
.dialog {
    position: absolute;
    left: 160px;
    top: 277px;
    width: 368px;
    height: 392px;
    border: 1px solid #888;
    background: #f6f6f6;
    box-shadow: 0 0 14px rgba(0, 0, 0, .25);
}
.dialog-head {
    height: 25px;
    padding: 0 10px 3px 3px;
    background: #fff;
    display: flex;
    align-items: center;
    justify-content: space-between;
}
.dialog-body {
    padding: 9px 12px 0;
}
.sec-title {
    height: 16px;
    display: flex;
    align-items: center;
    gap: 6px;
    color: #333;
}
.sec-title::after {
    content: "";
    flex: 1;
    height: 1px;
    background: #e2e2e2;
}
.wrap-opts {
    margin-top: 3px;
    padding-left: 94px;
    display: flex;
    gap: 47px;
    color: #333;
    line-height: 14px;
}
.wrap-opt {
    width: 50px;
    white-space: nowrap;
}
.wrap-tile {
    width: 50px;
    height: 50px;
    margin-bottom: 3px;
    border-radius: 4px;
    background: #fff;
    display: flex;
    align-items: center;
    justify-content: center;
}
.wrap-tile.is-active {
    background: #c6d8f4;
    border: 1px solid #6f9ae8;
}
.sec-size {
    margin-top: 4px;
}
.form-grid {
    padding-left: 8px;
    display: grid;
    grid-template-columns: 63px 100px 10px 63px 98px;
    grid-auto-rows: 20px;
    white-space: nowrap;
    color: #333;
}
.form-size { margin-top: 5px; }
.form-horiz { margin-top: 3px; }
.form-vert { margin-top: 4px; }
.form-grid label {
    height: 17px;
    line-height: 16px;
}
.form-grid .col-r {
    grid-column: 4;
}
.form-grid .col-v, .form-grid .spin {
    grid-column: 5;
}
.combo, .spin {
    height: 17px;
    border: 1px solid #e2e2e2;
    border-radius: 5px;
    background: #fff;
    display: flex;
    align-items: center;
    justify-content: space-between;
    overflow: hidden;
}
.combo {
    padding: 0 5px 0 3px;
}
.combo i {
    border: 4px solid transparent;
    border-top: 5px solid #888;
    border-bottom: none;
}
.spin {
    padding-left: 2px;
    border-right: none;
    border-radius: 5px 0 0 5px;
}
.spin b {
    position: relative;
    width: 16px;
    height: 17px;
    background: #d4d4d4;
}
.spin b::before, .spin b::after {
    content: "";
    position: absolute;
    left: 4px;
    border: 4px solid transparent;
}
.spin b::before {
    top: 2px;
    border-bottom: 5px solid #888;
    border-top: none;
}
.spin b::after {
    bottom: 2px;
    border-top: 5px solid #888;
    border-bottom: none;
}
.checks {
    margin-top: -1px;
    padding-left: 10px;
    color: #333;
}
.check-row {
    height: 20px;
    display: flex;
    align-items: center;
    gap: 4px;
    white-space: nowrap;
}
.check {
    width: 14px;
    height: 14px;
    border: 1px solid #bbb;
    border-radius: 3px;
    background: #fff;
    display: flex;
    align-items: center;
    justify-content: center;
}
.check.is-on {
    background: #6f9ae8;
    border-color: #6f9ae8;
}
.dialog-actions {
    margin-top: 5px;
    display: flex;
}
.btn {
    height: 22px;
    border: 1px solid #ddd;
    border-radius: 11px;
    text-align: center;
    color: #333;
    white-space: nowrap;
}
.btn-del {
    width: 92px;
    margin-right: 95px;
}
.btn-ok {
    width: 74px;
    margin-right: 7px;
    background: #6f9ae8;
    border-color: #6f9ae8;
    color: #fff;
}
.btn-cancel {
    width: 74px;
}

/* red annotations */
.mark {
    position: absolute;
    border: 3px solid var(--red);
    border-radius: 2px;
}
.mark-wrap {
    left: 340px;
    top: 308px;
    width: 112px;
    height: 105px;
}
.mark-form {
    left: 231px;
    top: 415px;
    width: 300px;
    height: 167px;
}
.mark-arrow {
    position: absolute;
    left: 590px;
    top: 370px;
}

/* watermark */
.watermark {
    position: absolute;
    left: 1268px;
    top: 760px;
    display: flex;
}
.wm-text {
    display: flex;
    flex-direction: column;
    width: 112px;
}
.wm-name {
    font-size: 21px;
    font-weight: 700;
    line-height: 24px;
    color: #5b9bd8;
    white-space: nowrap;
}
.wm-url {
    margin-top: -1px;
    font-family: "Liberation Sans", sans-serif;
    font-size: 16px;
    font-weight: 700;
    line-height: 24px;
    color: #5cb37a;
    white-space: nowrap;
}
```
